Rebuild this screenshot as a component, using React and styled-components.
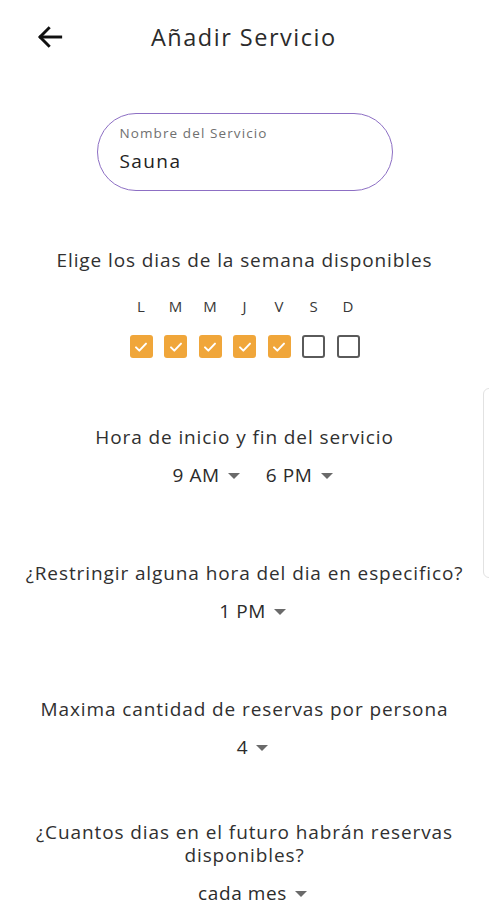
import React from 'react'
import styled, { createGlobalStyle } from 'styled-components'

const GlobalStyle = createGlobalStyle`
  html, body { margin: 0; padding: 0; background: #fff; }
  body { font-family: "Open Sans", "Noto Sans", sans-serif; color: #303030; }
`

const Screen = styled.div`
  position: relative;
  width: 489px;
  height: 900px;
  overflow: hidden;
  background: #fff;
`

const Header = styled.div`
  display: flex;
  align-items: center;
  height: 74px;
  padding: 0 0 0 33px;
`

const BackButton = styled.button`
  border: 0;
  background: none;
  padding: 0;
  width: 34px;
  height: 34px;
  display: flex;
  align-items: center;
  justify-content: center;
  cursor: pointer;
`

const Title = styled.h1`
  margin: 0 0 0 84px;
  font-size: 23.5px;
  font-weight: 400;
  letter-spacing: 1.5px;
  color: #2b2b2b;
`

const InputBox = styled.div`
  margin: 39px auto 0;
  width: 296px;
  height: 78px;
  box-sizing: border-box;
  border: 1.5px solid #8d6fc4;
  border-radius: 39px;
  padding: 10px 0 0 22px;
  display: flex;
  flex-direction: column;
`

const InputLabel = styled.span`
  font-size: 13.5px;
  letter-spacing: 1.1px;
  color: #707070;
  line-height: 18px;
`

const InputValue = styled.span`
  margin-top: 8px;
  font-size: 19px;
  letter-spacing: 1.4px;
  color: #222;
  line-height: 22px;
`

const Section = styled.section`
  display: flex;
  flex-direction: column;
  align-items: center;
  margin-top: ${p => p.$top}px;
`

const Question = styled.p`
  margin: 0;
  font-size: 19px;
  letter-spacing: 0.9px;
  line-height: 23px;
  text-align: center;
  color: #303030;
  padding: 0 18px;
`

const DaysGrid = styled.div`
  margin-top: 26px;
  display: grid;
  grid-template-columns: repeat(7, 22px);
  column-gap: 12.5px;
  row-gap: 20px;
  justify-items: center;
`

const DayLetter = styled.span`
  font-size: 15px;
  color: #383838;
  line-height: 17px;
`

const Check = styled.span`
  width: 23px;
  height: 23px;
  box-sizing: border-box;
  border-radius: 3px;
  display: flex;
  align-items: center;
  justify-content: center;
  background: ${p => (p.$on ? '#f0a63a' : '#fff')};
  border: ${p => (p.$on ? '0' : '2px solid #5a5a5a')};
`

const DropRow = styled.div`
  margin-top: 15px;
  padding-left: 16px;
  display: flex;
  gap: 26px;
`

const Drop = styled.div`
  display: flex;
  align-items: center;
  gap: 8px;
  font-size: 19px;
  letter-spacing: 0.6px;
  line-height: 22px;
  color: #2b2b2b;
`

const Caret = styled.span`
  width: 0;
  height: 0;
  border-left: 6px solid transparent;
  border-right: 6px solid transparent;
  border-top: 6px solid #6a6a6a;
  margin-top: 2px;
`

const SideTab = styled.div`
  position: absolute;
  right: -8px;
  top: 388px;
  width: 14px;
  height: 190px;
  box-sizing: border-box;
  border: 1.5px solid #e2e2e2;
  border-radius: 6px;
  background: #fff;
`

const Dropdown = ({ children }) => (
  <Drop>
    {children}
    <Caret />
  </Drop>
)

const days = ['L', 'M', 'M', 'J', 'V', 'S', 'D']
const checked = [true, true, true, true, true, false, false]

export default function App() {
  return (
    <Screen>
      <GlobalStyle />
      <Header>
        <BackButton aria-label="back">
          <svg width="32" height="32" viewBox="0 0 24 24" fill="none" stroke="#111" strokeWidth="2.2" strokeLinecap="square">
            <path d="M20 12H5" />
            <path d="M11 5.5L4.5 12l6.5 6.5" />
          </svg>
        </BackButton>
        <Title>Añadir Servicio</Title>
      </Header>

      <InputBox>
        <InputLabel>Nombre del Servicio</InputLabel>
        <InputValue>Sauna</InputValue>
      </InputBox>

      <Section $top={58}>
        <Question>Elige los dias de la semana disponibles</Question>
        <DaysGrid>
          {days.map((d, i) => (
            <DayLetter key={'l' + i}>{d}</DayLetter>
          ))}
          {checked.map((on, i) => (
            <Check key={'c' + i} $on={on}>
              {on && (
                <svg width="16" height="16" viewBox="0 0 24 24" fill="none" stroke="#fff" strokeWidth="3" strokeLinecap="round" strokeLinejoin="round">
                  <path d="M4.5 12.5l5 5L19.5 7" />
                </svg>
              )}
            </Check>
          ))}
        </DaysGrid>
      </Section>

      <Section $top={68}>
        <Question>Hora de inicio y fin del servicio</Question>
        <DropRow>
          <Dropdown>9 AM</Dropdown>
          <Dropdown>6 PM</Dropdown>
        </DropRow>
      </Section>

      <Section $top={76}>
        <Question>¿Restringir alguna hora del dia en especifico?</Question>
        <DropRow>
          <Dropdown>1 PM</Dropdown>
        </DropRow>
      </Section>

      <Section $top={76}>
        <Question>Maxima cantidad de reservas por persona</Question>
        <DropRow>
          <Dropdown>4</Dropdown>
        </DropRow>
      </Section>

      <Section $top={63}>
        <Question>¿Cuantos dias en el futuro habrán reservas disponibles?</Question>
        <DropRow>
          <Dropdown>cada mes</Dropdown>
        </DropRow>
      </Section>

      <SideTab />
    </Screen>
  )
}
